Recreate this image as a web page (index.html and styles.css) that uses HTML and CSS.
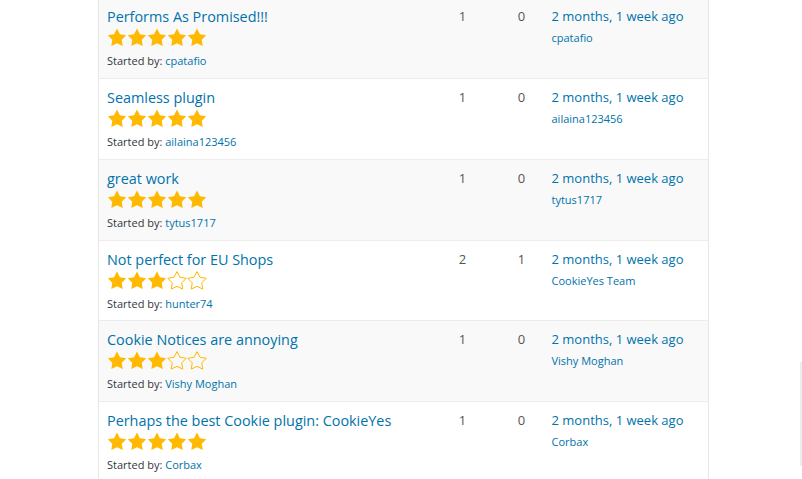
FILE: index.html
```html
<!DOCTYPE html>
<html>
<head>
<meta charset="utf-8">
<link rel="stylesheet" href="styles.css">
</head>
<body>
<svg class="defs" width="0" height="0" aria-hidden="true">
  <symbol id="star" viewBox="0 0 20 20">
    <polygon points="10,0.6 12.94,6.25 19.2,7.3 14.76,11.85 15.7,18.1 10,15.3 4.3,18.1 5.24,11.85 0.8,7.3 7.06,6.25"/>
  </symbol>
</svg>
<div class="page">
  <table class="topics">
    <colgroup>
      <col class="c-topic"><col class="c-posts"><col class="c-voices"><col class="c-fresh">
    </colgroup>
    <tbody>
      <tr class="alt">
        <td class="topic"><a class="title" href="#">Performs As Promised!!!</a>
          <div class="stars"><svg class="s full"><use href="#star"/></svg><svg class="s full"><use href="#star"/></svg><svg class="s full"><use href="#star"/></svg><svg class="s full"><use href="#star"/></svg><svg class="s full"><use href="#star"/></svg></div>
          <div class="by">Started by: <a href="#">cpatafio</a></div></td>
        <td class="num">1</td><td class="num">0</td>
        <td class="fresh"><a class="when" href="#">2 months, 1 week ago</a><a class="who" href="#">cpatafio</a></td>
      </tr>
      <tr>
        <td class="topic"><a class="title" href="#">Seamless plugin</a>
          <div class="stars"><svg class="s full"><use href="#star"/></svg><svg class="s full"><use href="#star"/></svg><svg class="s full"><use href="#star"/></svg><svg class="s full"><use href="#star"/></svg><svg class="s full"><use href="#star"/></svg></div>
          <div class="by">Started by: <a href="#">ailaina123456</a></div></td>
        <td class="num">1</td><td class="num">0</td>
        <td class="fresh"><a class="when" href="#">2 months, 1 week ago</a><a class="who" href="#">ailaina123456</a></td>
      </tr>
      <tr class="alt">
        <td class="topic"><a class="title" href="#">great work</a>
          <div class="stars"><svg class="s full"><use href="#star"/></svg><svg class="s full"><use href="#star"/></svg><svg class="s full"><use href="#star"/></svg><svg class="s full"><use href="#star"/></svg><svg class="s full"><use href="#star"/></svg></div>
          <div class="by">Started by: <a href="#">tytus1717</a></div></td>
        <td class="num">1</td><td class="num">0</td>
        <td class="fresh"><a class="when" href="#">2 months, 1 week ago</a><a class="who" href="#">tytus1717</a></td>
      </tr>
      <tr>
        <td class="topic"><a class="title" href="#">Not perfect for EU Shops</a>
          <div class="stars"><svg class="s full"><use href="#star"/></svg><svg class="s full"><use href="#star"/></svg><svg class="s full"><use href="#star"/></svg><svg class="s empty"><use href="#star"/></svg><svg class="s empty"><use href="#star"/></svg></div>
          <div class="by">Started by: <a href="#">hunter74</a></div></td>
        <td class="num">2</td><td class="num">1</td>
        <td class="fresh"><a class="when" href="#">2 months, 1 week ago</a><a class="who" href="#">CookieYes Team</a></td>
      </tr>
      <tr class="alt">
        <td class="topic"><a class="title" href="#">Cookie Notices are annoying</a>
          <div class="stars"><svg class="s full"><use href="#star"/></svg><svg class="s full"><use href="#star"/></svg><svg class="s full"><use href="#star"/></svg><svg class="s empty"><use href="#star"/></svg><svg class="s empty"><use href="#star"/></svg></div>
          <div class="by">Started by: <a href="#">Vishy Moghan</a></div></td>
        <td class="num">1</td><td class="num">0</td>
        <td class="fresh"><a class="when" href="#">2 months, 1 week ago</a><a class="who" href="#">Vishy Moghan</a></td>
      </tr>
      <tr>
        <td class="topic"><a class="title" href="#">Perhaps the best Cookie plugin: CookieYes</a>
          <div class="stars"><svg class="s full"><use href="#star"/></svg><svg class="s full"><use href="#star"/></svg><svg class="s full"><use href="#star"/></svg><svg class="s full"><use href="#star"/></svg><svg class="s full"><use href="#star"/></svg></div>
          <div class="by">Started by: <a href="#">Corbax</a></div></td>
        <td class="num">1</td><td class="num">0</td>
        <td class="fresh"><a class="when" href="#">2 months, 1 week ago</a><a class="who" href="#">Corbax</a></td>
      </tr>
    </tbody>
  </table>
</div>
<div class="scrollbar"></div>
</body>
</html>
```
FILE: styles.css
```css
html, body {
  margin: 0;
  padding: 0;
  background: #fff;
  overflow: hidden;
}
body {
  font-family: "Open Sans", "Noto Sans", sans-serif;
  color: #32373c;
}
.defs { position: absolute; width: 0; height: 0; }
.page {
  padding-left: 98px;
  margin-top: -2.6px;
}
a { color: #0073aa; text-decoration: none; }
.topics {
  width: 610px;
  border-collapse: collapse;
  table-layout: fixed;
  border-left: 1px solid #e6e6e6;
  border-right: 1px solid #e6e6e6;
}
.c-topic { width: 334px; }
.c-posts { width: 60px; }
.c-voices { width: 58px; }
.c-fresh { width: 158px; }
.topics tr { border-top: 1px solid #ececec; background: #fff; }
.topics tr.alt { background: #f9f9f9; }
.topics td {
  vertical-align: top;
  padding: 8px 0 0;
  height: 71.75px;
}
.topic { padding-left: 8px !important; }
.title {
  display: block;
  font-size: 14.4px;
  line-height: 21px;
}
.stars {
  display: flex;
  height: 20px;
  margin-top: 1px;
}
.s {
  width: 20px;
  height: 20px;
  display: block;
}
.s.full { fill: #ffb900; }
.s.empty { fill: none; stroke: #ffb900; stroke-width: 1; }
.by {
  font-size: 11px;
  line-height: 16px;
  margin-top: 5px;
}
.num {
  text-align: center;
  font-size: 13px;
  line-height: 20px;
  color: #555;
}
.fresh { padding-left: 1px !important; }
.when {
  display: block;
  font-size: 13px;
  line-height: 20px;
}
.who {
  display: block;
  font-size: 11px;
  line-height: 16px;
  margin-top: 4px;
}
.scrollbar {
  position: absolute;
  left: 800px;
  top: 362px;
  width: 2px;
  height: 104px;
  background: #ededed;
}
```
